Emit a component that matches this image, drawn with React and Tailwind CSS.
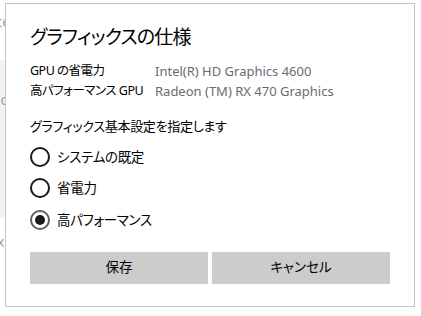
import React from "react";

function Radio({ label, checked }) {
  return (
    <div className="flex h-[31.5px] items-center">
      <div
        className={
          "flex h-[20px] w-[20px] items-center justify-center rounded-full border-2 " +
          (checked ? "border-[#5f5f5f]" : "border-[#1a1a1a]")
        }
      >
        {checked && <div className="h-[10px] w-[10px] rounded-full bg-[#1a1a1a]" />}
      </div>
      <span className="ml-[7px] whitespace-nowrap text-[13.5px] leading-[20px] tracking-[-0.3px] text-black">{label}</span>
    </div>
  );
}

export default function App() {
  return (
    <div
      className="relative h-[316px] w-[421px] overflow-hidden bg-white [font-feature-settings:'palt']"
      style={{ fontFamily: '"Noto Sans", "Noto Sans CJK JP", sans-serif' }}
    >
      {/* page behind the dialog */}
      <div className="flex flex-col text-[14px] text-[#a0a0a0]">
        <div className="mt-[12px] h-[20px] leading-[20px]">
          <span className="-ml-[8px]">ice</span>
        </div>
        <div className="mt-[28px] h-[158px] w-[60px] bg-[#f3f3f3] pt-[30px] leading-[20px]">
          <span className="-ml-[8px]">doc</span>
        </div>
        <div className="mt-[14px] leading-[20px]">
          <span className="-ml-[3px]">x</span>
        </div>
      </div>

      {/* dialog */}
      <div className="absolute left-[5px] top-[3px] flex h-[304px] w-[410px] flex-col border border-[#c4c4c4] bg-white px-[24px]">
        <div className="mt-[19px] whitespace-nowrap text-[19px] leading-[28px] tracking-[-0.8px] text-black">グラフィックスの仕様</div>

        <div className="mt-[10px] grid grid-cols-[125px_1fr] whitespace-nowrap text-[13px] leading-[20px]">
          <div className="text-[12.5px] tracking-[-0.5px] text-black">GPU の省電力</div>
          <div className="text-[#6b6b6b]">Intel(R) HD Graphics 4600</div>
          <div className="text-[12.5px] tracking-[-0.5px] text-black">高パフォーマンス GPU</div>
          <div className="text-[#6b6b6b]">Radeon (TM) RX 470 Graphics</div>
        </div>

        <div className="mt-[15px] whitespace-nowrap text-[13px] leading-[20px] tracking-[-0.3px] text-black">
          グラフィックス基本設定を指定します
        </div>

        <div className="mt-[5px] flex flex-col">
          <Radio label="システムの既定" />
          <Radio label="省電力" />
          <Radio label="高パフォーマンス" checked />
        </div>

        <div className="mt-[16px] grid grid-cols-2 gap-[4px]">
          <button className="h-[32px] bg-[#cccccc] text-[13.5px] text-black">保存</button>
          <button className="h-[32px] bg-[#cccccc] text-[13.5px] text-black">キャンセル</button>
        </div>
      </div>
    </div>
  );
}
